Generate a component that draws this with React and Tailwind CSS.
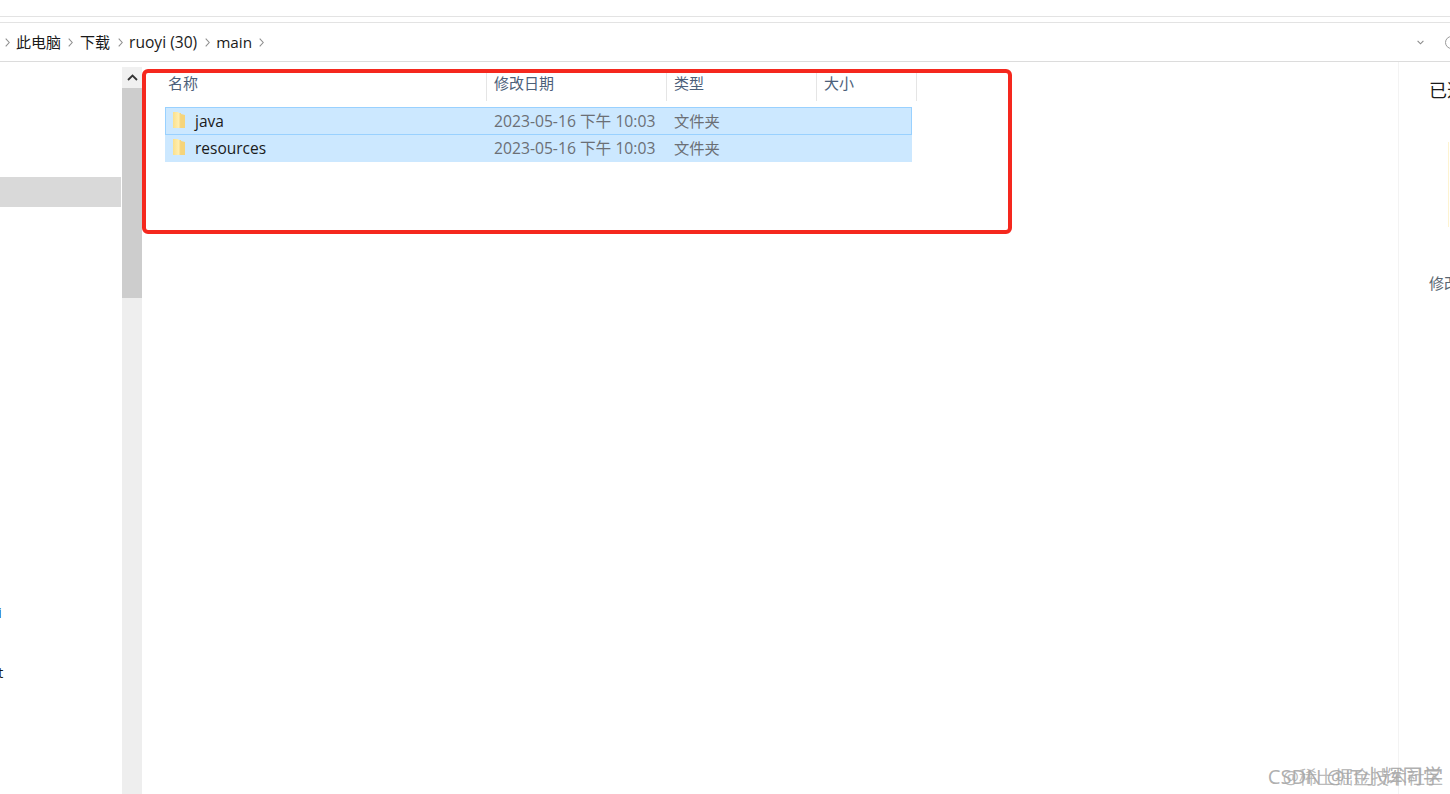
const FONT = '"Open Sans", "Noto Sans CJK SC", sans-serif';

function Chevron({ className = '' }) {
  return (
    <svg width="5" height="9" viewBox="0 0 5 9" className={`shrink-0 ${className}`} fill="none" stroke="#8f8f8f" strokeWidth="1.1">
      <path d="M0.7 0.7 L4.2 4.5 L0.7 8.3" />
    </svg>
  );
}

function Folder() {
  return (
    <svg width="16" height="18" viewBox="0 0 16 18" className="shrink-0 -mt-[2px]">
      <defs>
        <linearGradient id="fg" x1="0" y1="0" x2="1" y2="0">
          <stop offset="0" stopColor="#fbe08c" />
          <stop offset="0.7" stopColor="#ffeeb0" />
          <stop offset="1" stopColor="#f4cf72" />
        </linearGradient>
      </defs>
      <path d="M1 1 H6 L7 2 H9 V17 H1 Z" fill="url(#fg)" />
      <path d="M9 3 L13 4 V17 L9 17 Z" fill="#f6d47a" />
    </svg>
  );
}

function Header({ w, children }) {
  return (
    <div className={`${w} h-[31px] border-r border-[#e5e5e5] pl-[7px] pt-[2px] text-[15px] leading-[22px] text-[#4c607a] shrink-0`}>
      {children}
    </div>
  );
}

function Row({ name, selected }) {
  return (
    <div className={`flex items-center w-[747px] bg-[#cce8ff] ${selected ? 'h-[28px] border border-[#99d1ff]' : 'h-[27px] pb-[2px] border border-transparent'}`}>
      <div className="w-[322px] shrink-0 flex items-center pl-[6px] gap-[7px]">
        <Folder />
        <span className="text-[15.5px] leading-[22px] text-[#1a1a1a]">{name}</span>
      </div>
      <div className="w-[180px] shrink-0 pl-[6px] text-[15.7px] leading-[22px] text-[#6b6f75] whitespace-nowrap">2023-05-16 下午 10:03</div>
      <div className="pl-[6px] text-[15.3px] leading-[22px] text-[#6b6f75]">文件夹</div>
    </div>
  );
}

export default function App() {
  return (
    <div className="relative flex flex-col w-[1450px] h-[794px] overflow-hidden bg-white" style={{ fontFamily: FONT }}>
      <div className="h-[17px] shrink-0 border-b border-[#e3e3e3]" />
      <div className="h-[6px] shrink-0 border-b border-[#e3e3e3]" />
      <div className="h-[39px] shrink-0 border-b border-[#dcdcdc] flex items-center text-[15px] leading-[22px] text-[#1a1a1a]">
        <div className="flex items-center pl-[5px]">
          <Chevron />
          <span className="ml-[6px]">此电脑</span>
          <Chevron className="ml-[7px]" />
          <span className="ml-[7px]">下载</span>
          <Chevron className="ml-[8px]" />
          <span className="ml-[6px] text-[15.6px]">ruoyi (30)</span>
          <Chevron className="ml-[8px]" />
          <span className="ml-[6px] text-[15.3px]">main</span>
          <Chevron className="ml-[7px]" />
        </div>
        <div className="ml-auto flex items-center gap-[21px] -mr-[8px]">
          <svg width="7" height="5" viewBox="0 0 7 5" fill="none" stroke="#8a8a8a" strokeWidth="1.1">
            <path d="M0.6 0.8 L3.5 3.8 L6.4 0.8" />
          </svg>
          <div className="w-[13px] h-[13px] rounded-full border border-[#9a9a9a]" />
        </div>
      </div>
      <div className="flex flex-1 min-h-0">
        <div className="w-[122px] shrink-0 flex flex-col text-[15px] overflow-hidden">
          <div className="h-[115px] shrink-0" />
          <div className="h-[30px] w-[121px] bg-[#d9d9d9] shrink-0" />
          <div className="h-[395px] shrink-0" />
          <div className="h-[20px] leading-[20px] -ml-[2px] text-[#0b4a7a]">i</div>
          <div className="h-[40px] shrink-0" />
          <div className="h-[20px] leading-[20px] -ml-[2px] text-[#1a1a1a]">t</div>
        </div>
        <div className="w-[20px] shrink-0 flex flex-col bg-[#eeeeee] mt-[5px]">
          <div className="h-[21px] bg-[#f0f0f0] flex items-center justify-center shrink-0">
            <svg width="11" height="7" viewBox="0 0 11 7" fill="none" stroke="#333333" strokeWidth="1.8">
              <path d="M1 6 L5.5 1.5 L10 6" />
            </svg>
          </div>
          <div className="h-[210px] bg-[#cdcdcd] shrink-0" />
        </div>
        <div className="w-[1256px] shrink-0 pl-[23px] pt-[8px] flex flex-col">
          <div className="flex -ml-[2px] h-[31px] shrink-0">
            <Header w="w-[324px] !pl-[5px]">名称</Header>
            <Header w="w-[180px]">修改日期</Header>
            <Header w="w-[150px]">类型</Header>
            <Header w="w-[100px]">大小</Header>
          </div>
          <div className="h-[6px] shrink-0" />
          <div className="flex flex-col">
            <Row name="java" selected />
            <Row name="resources" />
          </div>
        </div>
        <div className="flex-1 min-w-0 border-l border-[#f3f3f3] flex flex-col pl-[30px] whitespace-nowrap overflow-hidden">
          <div className="mt-[15px] text-[18px] leading-[26px] text-[#1a1a1a]">已选择 2 个项目</div>
          <div className="mt-[39px] h-[85px] w-[60px] border-l border-[#fdf3d0] ml-[19px]" />
          <div className="mt-[46px] text-[15px] leading-[20px] text-[#5a6672]">修改日期</div>
        </div>
      </div>
      {/* red annotation */}
      <div className="absolute left-[142px] top-[69px] w-[870px] h-[165px] border-4 border-[#f5281e] rounded-[6px] pointer-events-none" />
      {/* watermarks */}
      <div className="absolute right-[7px] top-[763px] text-[20.3px] leading-[26px] text-[#9a9a9a]/80 whitespace-nowrap">CSDN @IT小辉同学</div>
      <div className="absolute right-[7px] top-[764px] text-[18px] leading-[26px] text-[#a8a8a8]/80 whitespace-nowrap">@稀土掘金技术社区</div>
    </div>
  );
}
